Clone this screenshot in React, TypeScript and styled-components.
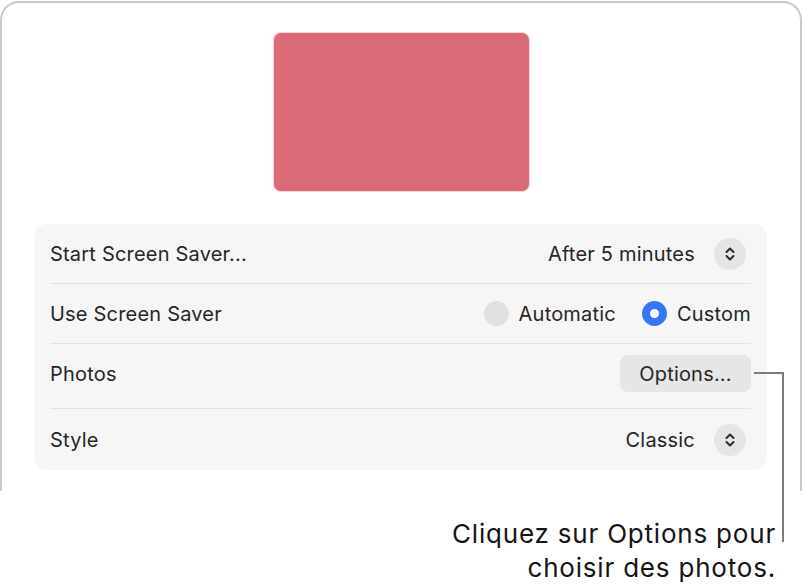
import React from 'react';
import styled, { createGlobalStyle } from 'styled-components';

const Global = createGlobalStyle`
  body {
    margin: 0;
    background: #ffffff;
    font-family: Inter, "Noto Sans", sans-serif;
    color: #262626;
  }
`

const Page = styled.div`
  position: relative;
  width: 803px;
  height: 588px;
  overflow: hidden;
`

const Frame = styled.div`
  box-sizing: border-box;
  width: 802px;
  height: 490px;
  margin-top: 1px;
  border: 2px solid #c9c9c9;
  border-bottom: none;
  border-radius: 19px 19px 0 0;
  padding-top: 30px;
  display: flex;
  flex-direction: column;
  align-items: center;
`

const Preview = styled.div`
  width: 255px;
  height: 158px;
  border-radius: 7px;
  background: #da6b76;
  box-shadow: 0 0 0 1px rgba(200, 90, 100, 0.25);
`

const Panel = styled.div`
  box-sizing: border-box;
  margin-top: 33px;
  width: 733px;
  margin-left: -1px;
  background: #f6f6f6;
  border-radius: 13px;
  padding: 0 16px 0 16px;
`

const Row = styled.div<{ $h: number; $last?: boolean; $pb?: number }>`
  box-sizing: border-box;
  height: ${p => p.$h}px;
  padding-bottom: ${p => p.$pb ?? 0}px;
  display: flex;
  align-items: center;
  justify-content: space-between;
  border-bottom: ${p => (p.$last ? 'none' : '1px solid #e3e3e3')};
  font-size: 20px;
  letter-spacing: 0.2px;
`

const Right = styled.div`
  display: flex;
  align-items: center;
`

const Value = styled.span`
  margin-right: 19px;
`

const Stepper = styled.div`
  width: 32px;
  height: 32px;
  border-radius: 50%;
  background: #e5e5e5;
  display: flex;
  align-items: center;
  justify-content: center;
  margin-right: 5px;
`

const Radio = styled.span<{ $on?: boolean }>`
  box-sizing: border-box;
  width: 25px;
  height: 25px;
  border-radius: 50%;
  background: ${p => (p.$on ? '#fff' : '#e1e1e1')};
  border: ${p => (p.$on ? '8.5px solid #3478f6' : 'none')};
  margin-right: 10px;
`

const RadioItem = styled.label`
  display: flex;
  align-items: center;
  & + & {
    margin-left: 26px;
  }
`

const Button = styled.div`
  width: 131px;
  height: 37px;
  border-radius: 8px;
  background: #e6e6e6;
  display: flex;
  align-items: center;
  justify-content: center;
`

const Callout = styled.div`
  position: absolute;
  left: 754px;
  top: 372px;
  width: 28px;
  height: 168px;
  border-top: 2px solid #7d7d7d;
  border-right: 2px solid #7d7d7d;
`

const Caption = styled.div`
  margin-top: 26px;
  padding-right: 27px;
  text-align: right;
  font-size: 26px;
  letter-spacing: 0.8px;
  line-height: 34px;
  color: #141414;
`

function Chevrons() {
  return (
    <svg width="12" height="16" viewBox="0 0 12 16" fill="none" stroke="#2a2a2a" strokeWidth="2" strokeLinecap="round" strokeLinejoin="round">
      <path d="M2.5 6 L6 2.5 L9.5 6" />
      <path d="M2.5 10 L6 13.5 L9.5 10" />
    </svg>
  )
}

export default function App() {
  return (
    <Page>
      <Global />
      <Frame>
        <Preview />
        <Panel>
          <Row $h={60}>
            <span>Start Screen Saver...</span>
            <Right>
              <Value>After 5 minutes</Value>
              <Stepper><Chevrons /></Stepper>
            </Right>
          </Row>
          <Row $h={60}>
            <span>Use Screen Saver</span>
            <Right>
              <RadioItem><Radio />Automatic</RadioItem>
              <RadioItem><Radio $on />Custom</RadioItem>
            </Right>
          </Row>
          <Row $h={65} $pb={5}>
            <span>Photos</span>
            <Button>Options...</Button>
          </Row>
          <Row $h={61} $last>
            <span>Style</span>
            <Right>
              <Value>Classic</Value>
              <Stepper><Chevrons /></Stepper>
            </Right>
          </Row>
        </Panel>
      </Frame>
      <Caption>
        Cliquez sur Options pour<br />choisir des photos.
      </Caption>
      <Callout />
    </Page>
  )
}
